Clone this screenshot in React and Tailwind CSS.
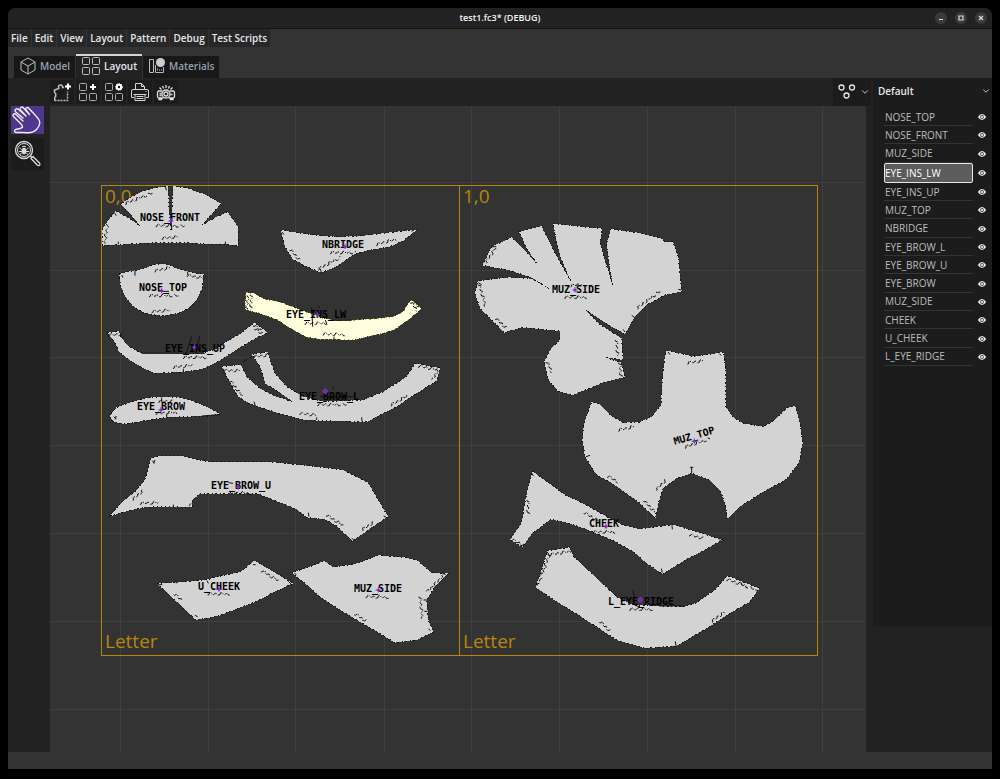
import { useState } from "react";
import { ChevronDown } from "lucide-react";

const MENUS = ["File", "Edit", "View", "Layout", "Pattern", "Debug", "Test Scripts"];

const PIECE_LIST = [
    "NOSE_TOP", "NOSE_FRONT", "MUZ_SIDE", "EYE_INS_LW", "EYE_INS_UP", "MUZ_TOP", "NBRIDGE",
    "EYE_BROW_L", "EYE_BROW_U", "EYE_BROW", "MUZ_SIDE", "CHEEK", "U_CHEEK", "L_EYE_RIDGE",
];

// Outlines are stored relative to `at`, three units per canvas pixel.
// marks: edge annotations, ticks: solid notch lines, sub: the small note under the name
const PIECES = [
    {
        name: "NOSE_FRONT", at: [95, 175], label: [170, 221], cross: [228, 138], sub: [182, 152, 272, 153],
        pts: "22,212 22,160 40,135 62,108 100,128 134,152 110,122 76,88 105,68 140,50 180,38 220,33 221,90 228,165 234,33 280,40 335,60 378,86 350,118 322,150 360,128 398,110 430,158 430,212 385,207 340,208 290,204 230,203 170,204 110,207 60,210",
        marks: [[90, 86, 172, 54], [38, 148, 28, 205], [200, 190, 248, 186]],
        ticks: [[58, 112, 64, 122], [212, 36, 214, 46], [70, 200, 70, 208], [392, 200, 390, 208], [228, 120, 230, 165]],
    },
    {
        name: "NOSE_TOP", at: [95, 175], label: [163, 291], cross: [200, 348], sub: [162, 362, 250, 362],
        pts: "73,297 100,290 150,280 172,270 200,266 230,272 255,284 300,294 326,298 322,340 305,375 280,400 250,415 200,423 150,415 115,395 90,365 76,330",
        marks: [[178, 288, 225, 278], [276, 301, 322, 309], [170, 410, 224, 406]],
        ticks: [[120, 286, 120, 302], [278, 290, 278, 300], [80, 300, 84, 308], [190, 349, 222, 349]],
    },
    {
        name: "EYE_INS_UP", at: [95, 310], label: [195, 352], cross: [298, 112], sub: [264, 142, 334, 142],
        pts: "36,68 72,64 80,85 100,108 135,128 170,130 320,130 360,118 400,92 440,68 478,38 498,52 518,68 480,86 440,110 400,135 360,160 320,178 260,186 180,190 140,172 100,148 72,125 58,95",
        marks: [[40, 76, 80, 72], [234, 172, 292, 166], [476, 46, 506, 66], [480, 56, 498, 72]],
        ticks: [[272, 135, 290, 80], [302, 132, 314, 78], [140, 130, 330, 130], [265, 176, 265, 186]],
    },
    {
        name: "EYE_BROW", at: [95, 310], label: [161, 410], cross: [198, 300], sub: [182, 310, 246, 308],
        pts: "50,308 65,292 120,272 160,263 205,260 250,262 290,272 330,288 376,312 340,318 215,322 150,332 90,342 55,336 45,318",
        marks: [[190, 274, 232, 274]],
        ticks: [[56, 320, 64, 326], [64, 318, 60, 328], [200, 262, 200, 276], [215, 314, 215, 322], [320, 318, 372, 314]],
    },
    {
        name: "NBRIDGE", at: [210, 220], label: [343, 248], cross: [405, 80], sub: [360, 98, 438, 98],
        pts: "212,30 260,38 320,46 380,50 440,49 500,42 560,35 622,28 580,62 540,80 470,92 430,104 380,140 333,158 290,140 248,118 225,80",
        marks: [[240, 88, 270, 122], [324, 148, 392, 112], [498, 74, 558, 58]],
        ticks: [[216, 36, 222, 44], [604, 34, 612, 30], [330, 146, 334, 156]],
    },
    {
        name: "EYE_INS_LW", at: [210, 220], label: [316, 318], cross: [322, 284], sub: [284, 310, 352, 310], active: true,
        pts: "108,218 130,220 165,238 210,246 250,262 300,280 340,295 380,302 440,300 500,296 550,290 580,275 595,250 605,240 635,266 600,295 560,325 520,340 470,350 430,360 380,358 330,358 290,350 250,330 200,298 150,280 105,268",
        marks: [[338, 342, 404, 344], [114, 226, 110, 266], [124, 224, 122, 268], [602, 246, 622, 272], [610, 246, 626, 262]],
        ticks: [[305, 262, 308, 320], [322, 258, 330, 264], [370, 301, 425, 301], [372, 350, 372, 358], [346, 300, 350, 312]],
    },
    {
        name: "EYE_BROW_L", at: [210, 220], label: [329, 400], cross: [346, 514], sub: [322, 554, 410, 554], glob: true,
        pts: "35,440 92,434 110,470 150,505 200,530 248,545 205,515 165,490 150,440 125,403 172,396 195,460 230,500 280,530 340,545 460,540 520,515 590,470 615,430 690,444 680,482 620,520 560,560 470,606 400,604 330,602 280,600 200,578 120,552 85,530 55,480",
        marks: [[40, 452, 92, 452], [130, 410, 172, 406], [60, 482, 98, 530], [542, 556, 592, 528], [268, 580, 320, 586], [625, 438, 684, 450], [684, 448, 668, 480]],
        ticks: [[132, 545, 136, 558], [455, 592, 456, 604], [368, 500, 372, 508], [100, 425, 110, 418], [118, 414, 126, 410], [330, 530, 430, 530], [320, 592, 320, 600]],
    },
    {
        name: "EYE_BROW_U", at: [95, 440], label: [241, 489], cross: [430, 142], sub: [402, 158, 470, 160],
        pts: "42,230 80,188 120,155 148,122 158,95 168,55 190,48 260,48 300,58 350,66 430,66 520,65 620,75 745,90 820,128 850,180 880,230 830,262 773,304 725,258 690,238 635,232 605,208 560,190 490,162 400,162 315,162 292,180 292,202 200,200 150,202 90,215",
        marks: [[112, 180, 146, 150], [135, 190, 190, 188], [695, 225, 746, 258], [800, 270, 838, 246]],
        ticks: [[172, 62, 178, 70], [180, 60, 176, 70], [282, 198, 288, 190], [640, 218, 642, 230], [770, 294, 776, 300], [866, 228, 874, 232], [235, 194, 235, 202], [400, 128, 414, 130]],
    },
    {
        name: "U_CHEEK", at: [95, 540], label: [219, 590], cross: [372, 148], sub: [338, 162, 404, 162],
        pts: "186,130 260,126 340,118 390,105 438,95 478,62 530,92 594,130 540,155 480,186 430,205 370,228 302,240 250,190",
        marks: [[238, 162, 262, 182], [500, 92, 552, 124]],
        ticks: [[190, 134, 202, 134], [474, 74, 482, 74], [300, 226, 308, 230], [580, 124, 588, 132], [336, 122, 340, 130], [242, 122, 244, 130]],
    },
    {
        name: "MUZ_SIDE", at: [95, 540], label: [378, 592], cross: [850, 150], sub: [812, 170, 884, 172],
        pts: "590,98 640,82 690,62 714,82 780,72 820,58 850,46 930,52 968,62 1010,98 1060,100 1020,140 995,180 1000,240 1015,275 965,300 900,308 850,278 760,225 680,175 630,130",
        marks: [[780, 222, 812, 242], [1045, 106, 992, 160], [975, 170, 982, 236]],
        ticks: [[598, 100, 604, 104], [1006, 272, 1000, 266], [1040, 98, 1052, 104], [986, 180, 996, 180], [988, 214, 998, 214]],
    },
    {
        name: "MUZ_SIDE", at: [465, 180], label: [576, 293], cross: [330, 330], sub: [298, 352, 365, 352],
        pts: "80,200 140,172 175,205 216,252 185,205 162,155 230,138 260,200 318,305 285,230 263,130 330,138 412,146 405,190 420,240 443,315 432,250 425,190 437,147 520,158 590,175 600,185 624,186 640,230 650,335 600,345 545,375 510,410 480,462 430,435 362,390 400,430 470,475 474,540 420,532 468,548 480,592 420,606 325,645 280,635 250,600 238,545 255,510 285,480 284,453 170,442 118,458 80,420 45,385 30,340 38,303 130,292 200,296 252,325 200,293 130,270 52,256",
        marks: [[62, 248, 92, 204], [42, 312, 64, 385], [92, 415, 126, 446], [454, 480, 458, 530], [464, 548, 468, 590], [516, 385, 590, 330], [245, 545, 262, 578], [316, 318, 350, 312]],
        ticks: [[500, 406, 508, 412], [474, 448, 480, 456], [640, 328, 648, 330], [80, 200, 94, 200], [40, 308, 50, 314]],
    },
    {
        name: "MUZ_TOP", at: [570, 340], label: [695, 439], tilt: -16, cross: [373, 304], sub: [344, 322, 420, 296],
        pts: "290,32 330,40 373,50 410,44 460,36 467,90 467,200 490,232 520,250 580,260 615,240 650,204 677,198 690,250 698,310 688,365 650,418 580,455 510,500 472,538 468,500 452,455 415,418 365,400 320,415 280,445 265,490 257,535 210,490 130,432 80,405 45,350 37,300 42,250 65,186 90,192 120,225 160,248 210,246 245,230 273,195 276,130 283,60",
        marks: [[352, 69, 402, 62], [144, 271, 192, 260], [112, 408, 144, 426], [258, 450, 288, 420], [222, 482, 262, 525]],
        ticks: [[365, 382, 365, 399], [360, 382, 370, 382], [48, 350, 60, 346], [294, 36, 300, 44], [448, 42, 454, 46], [373, 44, 375, 50]],
    },
    {
        name: "CHEEK", at: [500, 460], label: [604, 527], cross: [318, 200], sub: [278, 216, 345, 216],
        pts: "97,33 150,72 200,108 250,130 320,170 370,196 420,207 470,200 520,194 590,215 668,240 610,272 560,298 487,342 440,310 400,275 340,242 260,208 200,188 152,178 97,220 66,262 30,238 64,190 78,110",
        marks: [[84, 120, 84, 165], [35, 238, 70, 256], [568, 224, 612, 236], [252, 158, 300, 185]],
        ticks: [[516, 196, 517, 208], [484, 326, 487, 338], [96, 40, 100, 48], [658, 240, 664, 242]],
    },
    {
        name: "L_EYE_RIDGE", at: [500, 460], label: [641, 605], cross: [421, 420], sub: [388, 448, 458, 448], glob: true,
        pts: "142,272 208,262 220,288 285,350 350,410 400,435 550,440 590,428 650,385 682,347 778,385 750,425 690,460 620,505 530,558 435,565 350,540 240,468 170,425 106,382 125,330",
        marks: [[148, 282, 114, 378], [150, 284, 212, 274], [300, 485, 328, 512], [634, 485, 676, 455], [680, 358, 770, 390]],
        ticks: [[526, 544, 528, 558], [478, 438, 548, 438], [398, 392, 404, 410], [404, 436, 420, 440], [722, 366, 728, 378], [142, 276, 150, 290]],
    },
];

const GRID_X = [120, 208, 295, 384, 471, 559, 647, 735, 822];
const GRID_Y = [182, 270, 357, 445, 533, 621, 709];

// tiny handwriting-like stroke between two points
const WOBBLE = [3, -3, 1, -4, 4, 0, -2, 3, -1, 2, -4];

function scribble([x1, y1, x2, y2]) {
    const length = Math.hypot(x2 - x1, y2 - y1);
    const steps = Math.round(length / 3);
    const nx = -(y2 - y1) / length;
    const ny = (x2 - x1) / length;
    let d = "";
    for (let i = 0; i <= steps; i++) {
        const t = i / steps;
        const w = WOBBLE[(i * 7) % WOBBLE.length];
        const x = Math.round(x1 + (x2 - x1) * t + nx * w);
        const y = Math.round(y1 + (y2 - y1) * t + ny * w);
        d += `${i % 5 === 0 || i % 7 === 3 ? "M" : "L"}${x} ${y}`;
    }
    return d;
}

function Piece({ piece }) {
    const { name, at, label, pts, marks, ticks, cross, sub, tilt = 0, active, glob } = piece;
    return (
        <g>
            <g transform={`translate(${at[0]} ${at[1]}) scale(0.33333)`} fill="none">
                <polygon points={pts} fill={active ? "#ffffe0" : "#d3d3d3"} shapeRendering="crispEdges" />
                <polygon
                    points={pts}
                    stroke={active ? "#a8a83c" : "#111"}
                    strokeWidth="3"
                    strokeDasharray="5 7 3 9"
                    shapeRendering="crispEdges"
                />
                <g stroke="#111" strokeWidth="3">
                    {marks.map((m, i) => <path key={i} d={scribble(m)} />)}
                    {ticks.map(([x1, y1, x2, y2], i) => <line key={i} x1={x1} y1={y1} x2={x2} y2={y2} />)}
                    <path d={scribble(sub)} />
                </g>
            </g>
            <text
                x={label[0]}
                y={label[1]}
                textAnchor="middle"
                transform={`rotate(${tilt} ${label[0]} ${label[1]})`}
                className="font-['DejaVu_Sans_Mono',monospace] text-[10px] font-bold"
                fill="#000"
            >
                {name}
            </text>
            <g transform={`translate(${at[0]} ${at[1]}) scale(0.33333)`} stroke="#8a2fd0" strokeWidth="3">
                <path d={`M${cross[0] - 8} ${cross[1]}h15M${cross[0]} ${cross[1] - 9}v16`} />
                <circle cx={cross[0]} cy={cross[1]} r={glob ? 6 : 3} fill="#6a2a9c" />
            </g>
        </g>
    );
}

function LayoutCanvas() {
    return (
        <svg viewBox="50 106 816 646" className="min-w-0 flex-1" role="img" aria-label="Layout">
            <g stroke="#3f3f3f" shapeRendering="crispEdges">
                {GRID_X.map((x) => <line key={x} x1={x} x2={x} y1="106" y2="752" />)}
                {GRID_Y.map((y) => <line key={y} x1="50" x2="866" y1={y} y2={y} />)}
            </g>
            <g fill="#b8860b" className="font-['Open_Sans','Noto_Sans',sans-serif] text-[19px]">
                <text x="105" y="203">0,0</text>
                <text x="463" y="203">1,0</text>
                <text x="105" y="648">Letter</text>
                <text x="463" y="648">Letter</text>
            </g>
            <g fill="none" stroke="#b8860b">
                <rect x="101.5" y="185.5" width="358" height="470" />
                <rect x="459.5" y="185.5" width="358" height="470" />
            </g>
            {PIECES.map((p, i) => <Piece key={i} piece={p} />)}
        </svg>
    );
}

/* ---------- icons ---------- */

const CubeIcon = () => (
    <svg width="18" height="18" viewBox="0 0 18 18" fill="none" stroke="#bbb" strokeLinejoin="round">
        <path d="M9 1l7 4v8l-7 4-7-4V5zM2 5l7 4 7-4M9 9v8" />
    </svg>
);

const SquaresIcon = () => (
    <svg width="20" height="20" viewBox="0 0 20 20" fill="none" stroke="#bbb">
        <rect x="1.5" y="1.5" width="7" height="7" rx="1" />
        <rect x="11.5" y="1.5" width="7" height="7" rx="1" />
        <rect x="1.5" y="11.5" width="7" height="7" rx="1" />
        <rect x="11.5" y="11.5" width="7" height="7" rx="1" />
    </svg>
);

const MaterialsIcon = () => (
    <svg width="18" height="18" viewBox="0 0 18 18" fill="none" stroke="#bbb">
        <path d="M1.5 2.5h4v13h-4zM7.5 8v7.5h8V10" />
        <path d="M9.5 11v3M11.5 12v2M13.5 12v2" stroke="#777" />
        <circle cx="12.500" cy="5.500" r="4.500" fill="#ccc" stroke="none" />
    </svg>
);

const NewPieceIcon = () => (
    <svg width="20" height="20" viewBox="0 0 20 20" fill="none" stroke="#bbb" strokeWidth="1.5">
        <path d="M12 5.5h-1.5c1-3-4.500-3.500-4-.5l.3 1.500L2.500 8v2.500l1.200 1v3l-1 1v3" />
        <path d="M2.500 18.500h13v-9" strokeDasharray="2 1" />
        <path d="M16 1.500v6M13 4.500h6" stroke="#fff" strokeWidth="2" />
    </svg>
);

const AddLayoutIcon = () => (
    <svg width="20" height="20" viewBox="0 0 20 20" fill="none" stroke="#aaa">
        <rect x="1.500" y="1.500" width="7" height="7" rx="1" />
        <rect x="1.500" y="11.500" width="7" height="7" rx="1" />
        <rect x="11.500" y="11.500" width="7" height="7" rx="1" />
        <path d="M15 2v6M12 5h6" stroke="#fff" strokeWidth="2" />
    </svg>
);

const LayoutSettingsIcon = () => (
    <svg width="20" height="20" viewBox="0 0 20 20" fill="none" stroke="#aaa">
        <rect x="1.500" y="1.500" width="7" height="7" rx="1" />
        <rect x="1.500" y="11.500" width="7" height="7" rx="1" />
        <rect x="11.500" y="11.500" width="7" height="7" rx="1" />
        <circle cx="15" cy="5" r="2.200" stroke="#fff" strokeWidth="2" />
        <circle cx="15" cy="5" r="3.500" stroke="#fff" strokeDasharray="1.300 1.300" />
    </svg>
);

const PrintIcon = () => (
    <svg width="20" height="20" viewBox="0 0 20 20" fill="none" stroke="#d5d5d5" strokeLinejoin="round">
        <path d="M5.500 7V1.500h6l3 3V7M11.500 1.500v3h3M4 15.500H1.500V9q0-1.500 1.500-1.500h14q1.500 0 1.500 1.500v6.500H16" />
        <path d="M5 12.500h10v6H5zM3.500 12.500h13M6.500 14.500h7M6.500 16.500h7" />
        <path d="M15.500 9.500h1" />
    </svg>
);

const ProjectorIcon = () => (
    <svg width="20" height="20" viewBox="0 0 20 20" fill="none" stroke="#e0e0e0" strokeWidth="1.300">
        <path d="M6.500 9H3Q1.500 9 1.500 10.500v4Q1.500 16 3 16h4.500M13.500 9H17q1.500 0 1.500 1.500v4Q18.500 16 17 16h-4.500M3 16v1.500h2.500V16M14.500 16v1.500H17V16M3.500 11.500h2M3.500 13.500h2M14.500 12.500h2" />
        <circle cx="10" cy="12" r="4" />
        <circle cx="10" cy="12" r="2" />
        <path d="M10 3v3M6.500 4l1.200 2.500M13.500 4l-1.200 2.500M3.500 5.500l2 2M16.500 5.500l-2 2" />
    </svg>
);

const HandIcon = () => (
    <svg width="32" height="28" viewBox="0 0 32 28" fill="none" stroke="#eee" strokeWidth="1.400" strokeLinecap="round" strokeLinejoin="round">
        <path d="M9 18L1.500 10.500C0 8.500 2.500 7 4 8.500l7 6.500M11 12L3.800 6C2 4 4.500 1.500 6.500 3.500L14 10M14 10L8.500 4C7 2 10 0 11.500 2l6 6.500M17.500 8.500l-3.500-4.500c-1-2 1.500-3.500 3-1.500 3 3.500 8 8 10 11.500 2 4 0 7-2.500 9.500-2.500 2.500-6 3.500-9.500 3.200-2-.2-3.500-.2-5-.2H4c-2-.5-2-3 .5-3.200 2-.2 3.500-.6 6-2C10.500 19.800 10 19 9 18" />
    </svg>
);

const InspectIcon = () => (
    <svg width="28" height="28" viewBox="0 0 28 28" fill="none" stroke="#ddd">
        <circle cx="10" cy="10" r="8.500" strokeWidth="1.300" />
        <circle cx="10" cy="10" r="6.500" />
        <ellipse cx="10" cy="11" rx="2" ry="3" fill="#ddd" />
        <path d="M8 7q2-2 4 0M5.500 8l2 1.500M14.500 8l-2 1.500M5 11.500h10M6 14.500l1.800-1.500M14 14.500l-1.800-1.500M10 8v6" />
        <path d="M16 15.500l1.500 1.500M17 18.500l2-2 6.500 6.500q1 1.500 0 2.200t-2 0z" strokeWidth="1.300" strokeLinejoin="round" />
    </svg>
);

const NodesIcon = () => (
    <svg width="20" height="20" viewBox="0 0 20 20" fill="none" stroke="#e5e5e5" strokeWidth="1.300">
        <circle cx="4.500" cy="5.500" r="2.500" />
        <circle cx="15" cy="5.500" r="2.500" />
        <circle cx="9.500" cy="13.500" r="2.500" />
    </svg>
);

const EyeIcon = () => (
    <svg width="10" height="10" viewBox="0 0 10 10">
        <path d="M.800 5Q5-1 9.200 5 5 11 .800 5z" fill="#f0f0f0" />
        <circle cx="5" cy="5" r="1.900" fill="#444" />
        <circle cx="5" cy="5" r="1.100" fill="#f0f0f0" />
    </svg>
);

const TABS = [
    { name: "Model", icon: CubeIcon },
    { name: "Layout", icon: SquaresIcon },
    { name: "Materials", icon: MaterialsIcon },
];

const TOOLS = [
    { name: "New piece", icon: NewPieceIcon },
    { name: "Add page", icon: AddLayoutIcon },
    { name: "Page settings", icon: LayoutSettingsIcon },
    { name: "Print", icon: PrintIcon },
    { name: "Projector", icon: ProjectorIcon },
];

function WindowButton({ label, children }) {
    return (
        <button aria-label={label} className="flex size-3 items-center justify-center rounded-full bg-[#3a3a3a]">
            <svg width="12" height="12" viewBox="0 0 12 12" fill="none" stroke="#ddd" strokeWidth="1.200">{children}</svg>
        </button>
    );
}

function TitleBar() {
    return (
        <header className="grid h-[21px] shrink-0 grid-cols-[1fr_auto_1fr] items-center border-b border-[#151515] bg-[#222] px-[5px]">
            <span />
            <h1 className="text-[9px] font-semibold text-gray-100">test1.fc3* (DEBUG)</h1>
            <div className="flex justify-end gap-2">
                <WindowButton label="Minimize"><path d="M4 7.500h4" /></WindowButton>
                <WindowButton label="Maximize"><path d="M4 4h4v4H4z" /></WindowButton>
                <WindowButton label="Close"><path d="M4 4l4 4M8 4l-4 4" /></WindowButton>
            </div>
        </header>
    );
}

export default function App() {
    const [tab, setTab] = useState("Layout");
    const [names, setNames] = useState(PIECE_LIST);
    const [selected, setSelected] = useState(3);

    const rename = (i, value) => setNames(names.map((n, k) => (k === i ? value : n)));

    return (
        <div className="flex h-screen flex-col bg-black px-2 pt-2 pb-[10px] font-['Open_Sans','Noto_Sans',sans-serif] text-[10px] text-gray-200">
            <div className="flex min-h-0 flex-1 flex-col overflow-hidden rounded-t-lg bg-[#333]">
                <TitleBar />

                <nav className="flex gap-px">
                    {MENUS.map((m) => (
                        <button key={m} className="h-[18px] bg-[#272727] px-[3px] leading-[18px] font-semibold">{m}</button>
                    ))}
                </nav>

                <div role="tablist" className="mt-[7px] flex gap-px px-[6px]">
                    {TABS.map(({ name, icon: Icon }) => (
                        <button
                            key={name}
                            role="tab"
                            aria-selected={tab === name}
                            onClick={() => setTab(name)}
                            className={`flex h-6 items-center gap-[3px] border-t-2 px-[5px] pb-[2px] font-semibold ${
                                tab === name ? "border-gray-300 bg-[#222] text-gray-200" : "border-[#333] bg-[#181818] text-gray-400"
                            }`}
                        >
                            <Icon />
                            {name}
                        </button>
                    ))}
                </div>

                <div className="flex h-7 shrink-0 items-center bg-[#222] pl-[42px]">
                    <div className="flex gap-[2px]">
                        {TOOLS.map(({ name, icon: Icon }) => (
                            <button key={name} aria-label={name} className="flex h-6 w-6 items-center justify-center bg-[#1c1c1c]">
                                <Icon />
                            </button>
                        ))}
                    </div>
                    <button aria-label="Snapping" className="ml-auto flex h-7 w-[38px] items-center justify-between bg-[#1c1c1c] pr-px pl-[4px]">
                        <NodesIcon />
                        <ChevronDown size={10} />
                    </button>
                    <div className="relative ml-[2px] h-7 w-[119px] bg-[#1c1c1c]">
                        <select aria-label="Layout set" className="h-[26px] w-full appearance-none bg-transparent pl-[5px] font-semibold outline-none">
                            <option>Default</option>
                        </select>
                        <ChevronDown size={10} className="pointer-events-none absolute top-2 right-px" />
                    </div>
                </div>

                <main className="flex min-h-0 flex-1">
                    <div className="flex w-[42px] shrink-0 flex-col gap-1 bg-[#222] pl-[3px]">
                        <button aria-label="Pan" className="flex h-7 w-[33px] items-center justify-center bg-[#50358c]"><HandIcon /></button>
                        <button aria-label="Inspect" className="flex h-8 w-[33px] items-center justify-center bg-[#1c1c1c]"><InspectIcon /></button>
                    </div>

                    <LayoutCanvas />

                    <aside className="flex w-[126px] shrink-0 flex-col bg-[#222] pl-[7px]">
                        <ul className="flex h-[520px] flex-col bg-[#1c1c1c] pt-[2px] pr-[5px] pb-[260px] pl-[11px]">
                            {names.map((n, i) => (
                                <li key={i} className="flex flex-1 items-center gap-1">
                                    <input
                                        value={n}
                                        aria-label={`Piece ${i + 1}`}
                                        onFocus={() => setSelected(i)}
                                        onChange={(e) => rename(i, e.target.value)}
                                        className={`min-w-0 flex-1 outline-none ${
                                            selected === i
                                                ? "h-5 rounded-xs border border-gray-200 bg-[#5c5c5c] text-white"
                                                : "h-[18px] border-b border-[#333] px-px text-[#bdbdbd]"
                                        }`}
                                    />
                                    <button aria-label={`Toggle piece ${i + 1}`}><EyeIcon /></button>
                                </li>
                            ))}
                        </ul>
                    </aside>
                </main>

                <footer className="h-[17px] shrink-0" />
            </div>
        </div>
    );
}
